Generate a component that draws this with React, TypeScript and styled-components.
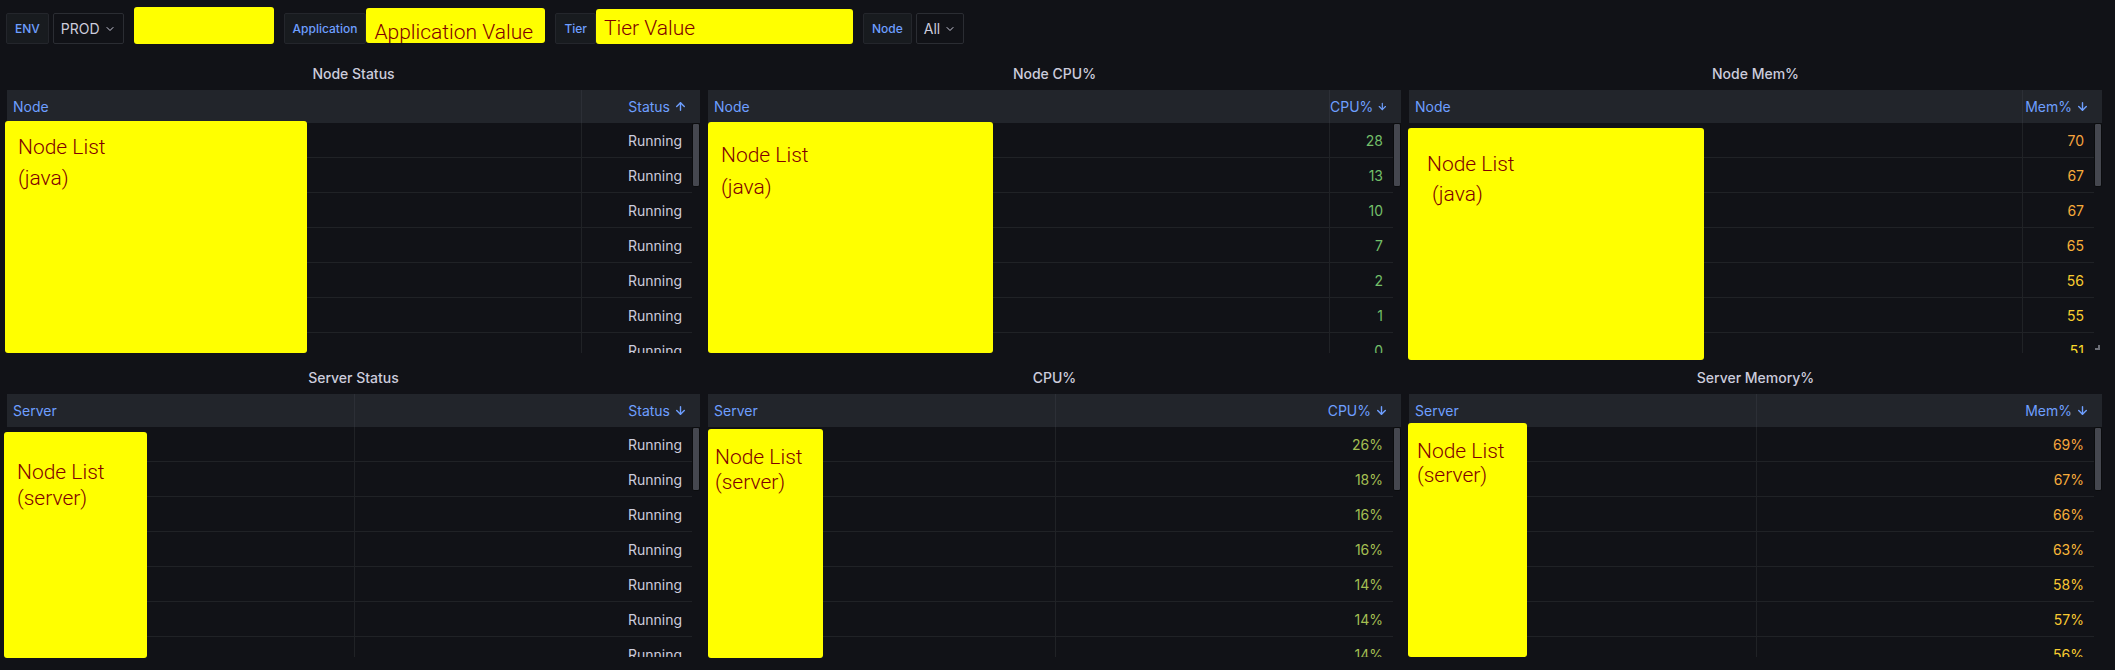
import React from "react"
import styled, { createGlobalStyle } from "styled-components"
import { ArrowDown, ArrowUp, ChevronDown } from "lucide-react"

const GlobalStyle = createGlobalStyle`
  body {
    margin: 0;
    background: #111217;
    color: #ccccdc;
    font-family: Inter, "Noto Sans", sans-serif;
  }
`

const Page = styled.div`
  width: 2115px;
  height: 670px;
  overflow: hidden;
  background: #111217;
`

/* ---------- variable toolbar ---------- */

const Toolbar = styled.div`
  display: flex;
  align-items: flex-end;
  gap: 10px;
  height: 44px;
  padding-left: 6px;
  box-sizing: border-box;
`

const VarGroup = styled.div`
  display: flex;
  align-items: flex-end;
  gap: 4px;
`

const VarLabel = styled.div<{ $joined?: boolean }>`
  display: flex;
  align-items: center;
  height: 31px;
  padding: 0 8px;
  box-sizing: border-box;
  background: #181b1f;
  border: 1px solid #24262c;
  border-radius: 2px;
  font-size: 12px;
  font-weight: 500;
  color: #6e9fff;
  margin-right: ${({ $joined }) => ($joined ? "-4px" : "0")};
`

const VarPicker = styled.div`
  display: flex;
  align-items: center;
  gap: 4px;
  height: 31px;
  padding: 0 7px;
  box-sizing: border-box;
  border: 1px solid #2b2d33;
  border-radius: 2px;
  font-size: 14px;
  color: #ccccdc;
`

/* yellow stickers pasted over the screenshot */
const Redaction = styled.div<{ $w: number; $h: number; $drop?: number }>`
  width: ${({ $w }) => $w}px;
  height: ${({ $h }) => $h}px;
  margin-bottom: ${({ $drop }) => $drop ?? 0}px;
  box-sizing: border-box;
  display: flex;
  align-items: center;
  padding: 0 8px;
  background: #ffff00;
  border-radius: 3px;
  color: #800000;
  font-family: Roboto, "Noto Sans", sans-serif;
  font-weight: 300;
  font-size: 21px;
  white-space: nowrap;
`

const RedactionText = styled.span<{ $shift?: number }>`
  transform: translateY(${({ $shift }) => $shift ?? 0}px);
`

/* ---------- dashboard grid ---------- */

const Dashboard = styled.div`
  display: grid;
  grid-template-columns: repeat(3, 1fr);
  grid-auto-rows: 296px;
  gap: 8px;
  padding: 13px 13px 0 7px;
`

const Panel = styled.section`
  position: relative;
  display: flex;
  flex-direction: column;
  min-width: 0;
`

const PanelTitle = styled.h2`
  margin: 0;
  height: 33px;
  flex-shrink: 0;
  display: flex;
  align-items: center;
  justify-content: center;
  font-size: 14px;
  font-weight: 500;
  color: #ccccdc;
`

const HeaderRow = styled.div<{ $cols: string }>`
  display: grid;
  grid-template-columns: ${({ $cols }) => $cols};
  height: 33px;
  flex-shrink: 0;
  background: #22252b;
`

const HeaderCell = styled.div<{ $right?: boolean }>`
  display: flex;
  align-items: center;
  justify-content: ${({ $right }) => ($right ? "flex-end" : "flex-start")};
  gap: 4px;
  padding: ${({ $right }) => ($right ? "0 13px 0 0" : "0 0 0 6px")};
  font-size: 14px;
  color: #6e9fff;
  white-space: nowrap;

  & + & {
    border-left: 1px solid #2c2f36;
  }
`

const Body = styled.div`
  flex: 1;
  min-height: 0;
  display: grid;
  grid-template-columns: 1fr 8px;
  overflow: hidden;
`

const Rows = styled.div`
  min-width: 0;
`

const Row = styled.div<{ $cols: string }>`
  display: grid;
  grid-template-columns: ${({ $cols }) => $cols};
  height: 35px;
  box-sizing: border-box;
  border-bottom: 1px solid #202226;
`

const Cell = styled.div``

const ValueCell = styled.div<{ $color: string }>`
  display: flex;
  align-items: center;
  justify-content: flex-end;
  padding-right: 10px;
  border-left: 1px solid #202226;
  font-size: 14px;
  color: ${({ $color }) => $color};
`

const ScrollTrack = styled.div`
  position: relative;
`

const ScrollThumb = styled.div`
  height: 64px;
  box-sizing: border-box;
  background: #45474f;
  border: 1px solid #0b0c0e;
  border-radius: 2px;
`

const ResizeHandle = styled.div`
  position: absolute;
  right: 2px;
  bottom: 3px;
  width: 5px;
  height: 5px;
  border-right: 2px solid #6d6f77;
  border-bottom: 2px solid #6d6f77;
  box-sizing: border-box;
`

const Sticky = styled.div<{
  $left: number
  $top: number
  $w: number
  $h: number
  $padX: number
  $padY: number
  $lh: number
}>`
  position: absolute;
  left: ${({ $left }) => $left}px;
  top: ${({ $top }) => $top}px;
  width: ${({ $w }) => $w}px;
  height: ${({ $h }) => $h}px;
  padding: ${({ $padY, $padX }) => `${$padY}px ${$padX}px`};
  box-sizing: border-box;
  background: #ffff00;
  border-radius: 3px;
  color: #800000;
  font-family: Roboto, "Noto Sans", sans-serif;
  font-weight: 300;
  font-size: 21px;
  line-height: ${({ $lh }) => $lh}px;
  white-space: pre;
`

/* ---------- data ---------- */

// Grafana green-yellow-red continuous scheme over 0..100
const grYlRd = (v: number): string => {
  const g = [115, 191, 105]
  const y = [250, 222, 42]
  const r = [242, 73, 92]
  const t = Math.max(0, Math.min(1, v / 100))
  const [a, b, k] = t < 0.5 ? [g, y, t * 2] : [y, r, (t - 0.5) * 2]
  const c = a.map((x, i) => Math.round(x + (b[i] - x) * k))
  return `rgb(${c[0]}, ${c[1]}, ${c[2]})`
}

type StickyProps = {
  left: number
  top: number
  w: number
  h: number
  padX: number
  padY: number
  lh: number
  text: string
}

type PanelDef = {
  title: string
  keyCol: string
  valueCol: string
  sortUp?: boolean
  headerCols: string
  rowCols: string
  values: { text: string; color: string }[]
  sticky: StickyProps
  resize?: boolean
}

const running = Array.from({ length: 7 }, () => ({ text: "Running", color: "#ccccdc" }))
const cpuGreen = "#73bf69"
const cpuOlive = "#a4bf52"

const topPanels: PanelDef[] = [
  {
    title: "Node Status",
    keyCol: "Node",
    valueCol: "Status",
    sortUp: true,
    headerCols: "1fr 119px",
    rowCols: "1fr 111px",
    values: running,
    sticky: { left: -2, top: 64, w: 302, h: 232, padX: 13, padY: 11, lh: 31, text: "Node List\n(java)" },
  },
  {
    title: "Node CPU%",
    keyCol: "Node",
    valueCol: "CPU%",
    headerCols: "1fr 72px",
    rowCols: "1fr 64px",
    values: [28, 13, 10, 7, 2, 1, 0].map((v) => ({ text: String(v), color: cpuGreen })),
    sticky: { left: 0, top: 65, w: 285, h: 231, padX: 13, padY: 17, lh: 32, text: "Node List\n(java)" },
  },
  {
    title: "Node Mem%",
    keyCol: "Node",
    valueCol: "Mem%",
    headerCols: "1fr 80px",
    rowCols: "1fr 72px",
    values: [70, 67, 67, 65, 56, 55, 51].map((v) => ({ text: String(v), color: grYlRd(v) })),
    sticky: { left: -1, top: 71, w: 296, h: 232, padX: 19, padY: 21, lh: 30, text: "Node List\n (java)" },
    resize: true,
  },
]

const bottomPanels: PanelDef[] = [
  {
    title: "Server Status",
    keyCol: "Server",
    valueCol: "Status",
    headerCols: "1fr 1fr",
    rowCols: "calc(50% + 4px) 1fr",
    values: running,
    sticky: { left: -3, top: 71, w: 143, h: 226, padX: 13, padY: 27, lh: 26, text: "Node List\n(server)" },
  },
  {
    title: "CPU%",
    keyCol: "Server",
    valueCol: "CPU%",
    headerCols: "1fr 1fr",
    rowCols: "calc(50% + 4px) 1fr",
    values: [26, 18, 16, 16, 14, 14, 14].map((v) => ({ text: `${v}%`, color: cpuOlive })),
    sticky: { left: 0, top: 68, w: 115, h: 229, padX: 7, padY: 16, lh: 25, text: "Node List\n(server)" },
  },
  {
    title: "Server Memory%",
    keyCol: "Server",
    valueCol: "Mem%",
    headerCols: "1fr 1fr",
    rowCols: "calc(50% + 4px) 1fr",
    values: [69, 67, 66, 63, 58, 57, 56].map((v) => ({ text: `${v}%`, color: grYlRd(v) })),
    sticky: { left: -1, top: 62, w: 119, h: 234, padX: 9, padY: 16, lh: 24, text: "Node List\n(server)" },
  },
]

const TablePanel = ({ def }: { def: PanelDef }) => {
  const Arrow = def.sortUp ? ArrowUp : ArrowDown
  const s = def.sticky
  return (
    <Panel>
      <PanelTitle>{def.title}</PanelTitle>
      <HeaderRow $cols={def.headerCols}>
        <HeaderCell>{def.keyCol}</HeaderCell>
        <HeaderCell $right>
          {def.valueCol}
          <Arrow size={13} strokeWidth={2.6} />
        </HeaderCell>
      </HeaderRow>
      <Body>
        <Rows>
          {def.values.map((v, i) => (
            <Row key={i} $cols={def.rowCols}>
              <Cell />
              <ValueCell $color={v.color}>{v.text}</ValueCell>
            </Row>
          ))}
        </Rows>
        <ScrollTrack>
          <ScrollThumb />
        </ScrollTrack>
      </Body>
      {def.resize && <ResizeHandle />}
      <Sticky
        $left={s.left}
        $top={s.top}
        $w={s.w}
        $h={s.h}
        $padX={s.padX}
        $padY={s.padY}
        $lh={s.lh}
      >
        {s.text}
      </Sticky>
    </Panel>
  )
}

const App = (): JSX.Element => (
  <Page>
    <GlobalStyle />
    <Toolbar>
      <VarGroup>
        <VarLabel>ENV</VarLabel>
        <VarPicker>
          PROD
          <ChevronDown size={12} strokeWidth={2} />
        </VarPicker>
      </VarGroup>
      <Redaction $w={140} $h={37} />
      <VarGroup>
        <VarLabel $joined>Application</VarLabel>
        <Redaction $w={179} $h={35} $drop={1}>
          <RedactionText $shift={6}>Application Value</RedactionText>
        </Redaction>
      </VarGroup>
      <VarGroup>
        <VarLabel $joined>Tier</VarLabel>
        <Redaction $w={257} $h={35}>
          <RedactionText $shift={1}>Tier Value</RedactionText>
        </Redaction>
      </VarGroup>
      <VarGroup>
        <VarLabel>Node</VarLabel>
        <VarPicker>
          All
          <ChevronDown size={12} strokeWidth={2} />
        </VarPicker>
      </VarGroup>
    </Toolbar>
    <Dashboard>
      {[...topPanels, ...bottomPanels].map((p) => (
        <TablePanel key={p.title} def={p} />
      ))}
    </Dashboard>
  </Page>
)

export default App
